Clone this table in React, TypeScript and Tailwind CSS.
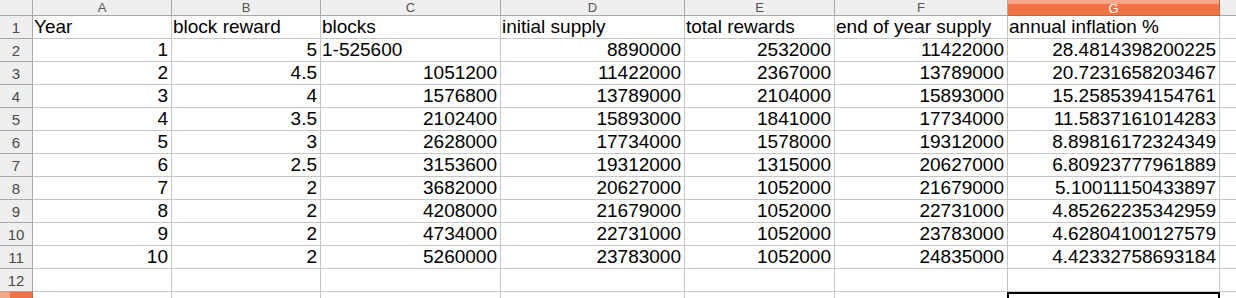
import React from 'react'

const COLS = ['A', 'B', 'C', 'D', 'E', 'F', 'G']

type Cell = string | number | null

const ROWS: Cell[][] = [
  ['Year', 'block reward', 'blocks', 'initial supply', 'total rewards', 'end of year supply', 'annual inflation %'],
  [1, 5, '1-525600', 8890000, 2532000, 11422000, '28.4814398200225'],
  [2, 4.5, 1051200, 11422000, 2367000, 13789000, '20.7231658203467'],
  [3, 4, 1576800, 13789000, 2104000, 15893000, '15.2585394154761'],
  [4, 3.5, 2102400, 15893000, 1841000, 17734000, '11.5837161014283'],
  [5, 3, 2628000, 17734000, 1578000, 19312000, '8.89816172324349'],
  [6, 2.5, 3153600, 19312000, 1315000, 20627000, '6.80923777961889'],
  [7, 2, 3682000, 20627000, 1052000, 21679000, '5.10011150433897'],
  [8, 2, 4208000, 21679000, 1052000, 22731000, '4.85262235342959'],
  [9, 2, 4734000, 22731000, 1052000, 23783000, '4.62804100127579'],
  [10, 2, 5260000, 23783000, 1052000, 24835000, '4.42332758693184'],
  [null, null, null, null, null, null, null],
]

const isNum = (v: Cell, col: number) =>
  typeof v === 'number' || (col === 6 && typeof v === 'string' && /^[\d.]+$/.test(v))

const GRID = 'grid grid-cols-[33px_139px_149px_180px_184px_150px_173px_212px_1fr]'

export default function App() {
  return (
    <div className="w-[1236px] h-[298px] overflow-hidden bg-white font-['Liberation_Sans',Arial,sans-serif] text-black">
      {/* column headers */}
      <div className={`${GRID} h-[16px]`}>
        <div className="bg-[#efefef] border-r border-b border-[#a8a8a8]" />
        {COLS.map((c) =>
          c === 'G' ? (
            <div
              key={c}
              className="flex flex-col border-r border-b border-[#c9603a] bg-[#ef7347] text-white text-[13px] leading-none"
            >
              <div className="h-[4px] bg-[#f5a889]" />
              <div className="flex-1 flex items-center justify-center -mt-[3px]">{c}</div>
            </div>
          ) : (
            <div
              key={c}
              className="flex items-center justify-center bg-[#efefef] border-r border-b border-[#a8a8a8] text-[13px] leading-none text-[#555]"
            >
              {c}
            </div>
          )
        )}
        <div className="bg-[#efefef] border-b border-[#a8a8a8]" />
      </div>

      {ROWS.map((row, r) => (
        <div key={r} className={`${GRID} h-[23px]`}>
          <div className="flex items-center justify-center bg-[#efefef] border-r border-b border-[#a8a8a8] text-[15px] text-[#4a4a4a] leading-none">
            {r + 1}
          </div>
          {row.map((v, c) => (
            <div
              key={c}
              className={`flex items-end pb-[1px] pl-[1px] pr-[3px] border-r border-b border-[#c6c6c6] text-[19px] leading-[20px] whitespace-nowrap overflow-visible ${
                isNum(v, c) ? 'justify-end' : 'justify-start'
              }`}
            >
              {v ?? ''}
            </div>
          ))}
          <div className="border-b border-[#c6c6c6]" />
        </div>
      ))}

      {/* row 13, partly visible, holds the cursor cell G13 */}
      <div className={`${GRID} h-[23px]`}>
        <div className="flex bg-[#ef7347] border-r border-[#c9603a]">
          <div className="w-[10px] bg-[#f5a889]" />
        </div>
        {COLS.map((c) =>
          c === 'G' ? (
            <div key={c} className="border-2 border-black -ml-[1px]" />
          ) : (
            <div key={c} className="border-r border-[#c6c6c6]" />
          )
        )}
        <div />
      </div>
    </div>
  )
}
